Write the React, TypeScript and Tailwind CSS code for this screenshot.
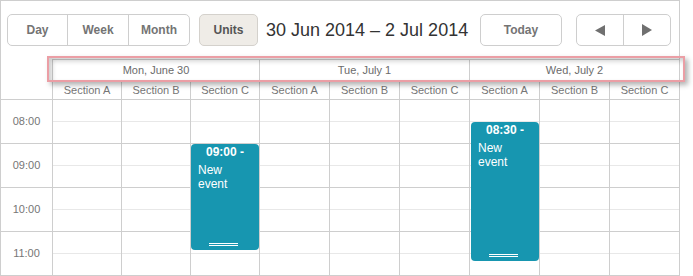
import React from "react";

const days = ["Mon, June 30", "Tue, July 1", "Wed, July 2"];
const sections = ["Section A", "Section B", "Section C"];
const hours = ["08:00", "09:00", "10:00", "11:00"];

const gridCols = "grid-cols-[52px_69px_69px_69px_70px_70px_70px_70px_70px_69px]";

/* ================= EVENT ================= */
function EventBox({ time, className }: { time: string; className: string }) {
  return (
    <div className={`absolute w-[68px] rounded-[4px] bg-[#1796b0] text-white ${className}`}>
      <div className="pt-px text-center text-[12px] font-bold leading-[14px]">{time} -</div>
      <div className="mt-[4px] px-[7px] text-[12px] leading-[14px]">
        New
        <br />
        event
      </div>
      <div className="absolute bottom-[4px] left-[18px] h-[3px] w-[29px] border-y border-white" />
    </div>
  );
}

/* ================= GRID COLUMN ================= */
function Column({ last, children }: { last?: boolean; children?: React.ReactNode }) {
  return (
    <div className={`relative ${last ? "" : "border-r border-[#cecece]"}`}>
      {hours.map((h) => (
        <div key={h} className="h-[44px] border-b border-[#cecece]">
          <div className="h-[22px] border-b border-[#e8e8e8]" />
        </div>
      ))}
      {children}
    </div>
  );
}

export default function App() {
  const cols = [0, 1, 2, 3, 4, 5, 6, 7, 8];

  return (
    <div className="relative h-[276px] w-[693px] bg-white font-['Liberation_Sans',Arial,sans-serif]">
      <div className="flex h-[276px] w-[680px] flex-col border border-[#cecece]">
        {/* ================= NAV ================= */}
        <div className="flex h-[58px] shrink-0 justify-between pl-[6px] pr-[8px] pt-[13px]">
          <div className="flex items-start">
            <div className="flex h-[32px] rounded-[5px] border border-[#cecece] text-[12px] font-bold text-[#747474]">
              <div className="flex w-[60px] items-center justify-center border-r border-[#cecece]">Day</div>
              <div className="flex w-[61px] items-center justify-center border-r border-[#cecece]">Week</div>
              <div className="flex w-[60px] items-center justify-center">Month</div>
            </div>
            <div className="ml-[9px] flex h-[32px] w-[59px] items-center justify-center rounded-[5px] border border-[#d4d1cc] bg-[#efece7] text-[12px] font-bold text-[#555]">
              Units
            </div>
            <div className="ml-[8px] flex h-[32px] items-center text-[18px] text-[#333]">
              30 Jun 2014 – 2 Jul 2014
            </div>
          </div>

          <div className="flex items-start">
            <div className="flex h-[32px] w-[82px] items-center justify-center rounded-[5px] border border-[#cecece] text-[12px] font-bold text-[#747474]">
              Today
            </div>
            <div className="ml-[14px] flex h-[32px] w-[95px] rounded-[5px] border border-[#cecece]">
              <div className="flex w-[47px] items-center justify-center border-r border-[#cecece]">
                <svg width="10" height="11" viewBox="0 0 10 11">
                  <polygon points="10,0 10,11 0,5.5" fill="#707070" />
                </svg>
              </div>
              <div className="flex flex-1 items-center justify-center">
                <svg width="10" height="12" viewBox="0 0 10 12">
                  <polygon points="0,0 0,12 10,6" fill="#707070" />
                </svg>
              </div>
            </div>
          </div>
        </div>

        {/* ================= DAY HEADER ================= */}
        <div className="grid h-[22px] shrink-0 grid-cols-[52px_207px_210px_209px]">
          <div className="border-r border-[#cecece]" />
          {days.map((d, i) => (
            <div
              key={d}
              className={`flex items-center justify-center border-y border-[#cecece] text-[11px] text-[#6b6b6b] ${
                i < 2 ? "border-r" : ""
              }`}
            >
              {d}
            </div>
          ))}
        </div>

        {/* ================= SECTION HEADER ================= */}
        <div className={`grid h-[19px] shrink-0 border-b border-[#cecece] ${gridCols}`}>
          <div className="border-r border-[#cecece]" />
          {cols.map((c) => (
            <div
              key={c}
              className={`flex items-center justify-center text-[11px] text-[#767676] ${
                c < 8 ? "border-r border-[#cecece]" : ""
              }`}
            >
              {sections[c % 3]}
            </div>
          ))}
        </div>

        {/* ================= BODY ================= */}
        <div className={`grid min-h-0 flex-1 overflow-hidden ${gridCols}`}>
          <div className="border-r border-[#cecece]">
            {hours.map((h) => (
              <div
                key={h}
                className="flex h-[44px] items-center justify-center border-b border-[#cecece] text-[11px] text-[#767676]"
              >
                {h}
              </div>
            ))}
          </div>
          {cols.map((c) => (
            <Column key={c} last={c === 8}>
              {c === 2 && <EventBox time="09:00" className="left-0 top-[44px] h-[106px]" />}
              {c === 6 && <EventBox time="08:30" className="left-[1px] top-[22px] h-[139px]" />}
            </Column>
          ))}
        </div>
      </div>

      {/* ================= HIGHLIGHT ================= */}
      <div className="pointer-events-none absolute left-[47px] top-[56px] h-[26px] w-[638px] border-2 border-[#eb9ea5] shadow-[3px_3px_5px_rgba(0,0,0,0.3),inset_3px_3px_5px_rgba(0,0,0,0.2)]" />
    </div>
  );
}
